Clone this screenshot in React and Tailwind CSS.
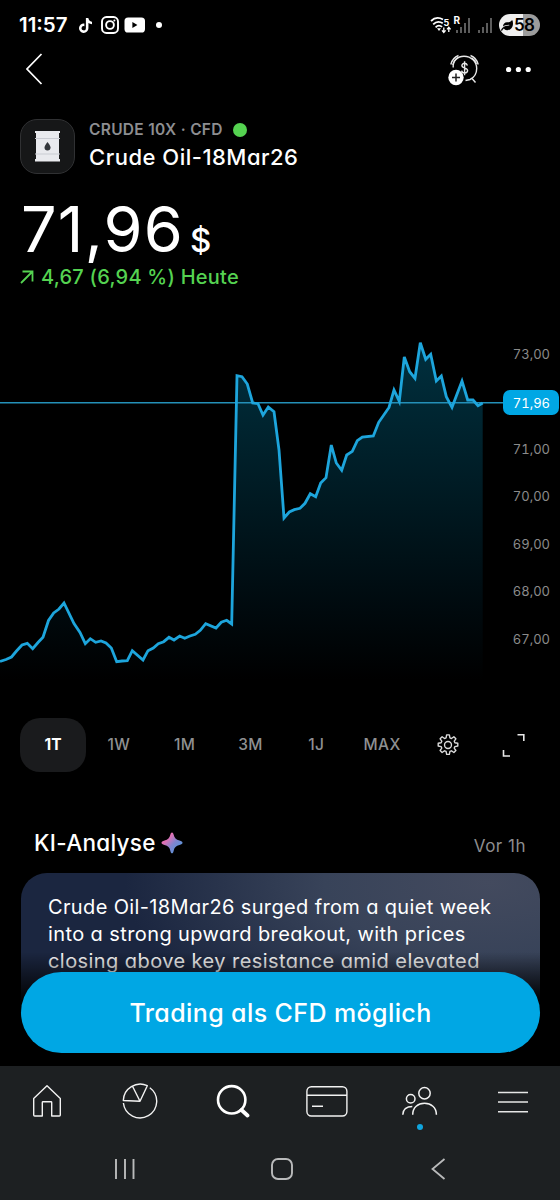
import { FaTiktok, FaInstagram, FaYoutube, FaLeaf } from "react-icons/fa";

const points = "0,661.5 6,659.5 11.5,657 16.5,651 22,645 27.3,643.3 32.7,648.7 38,642.5 43,637.3 48.5,620.5 53.7,613 59,609 64,603 74,623.5 80,632.5 85.3,643.7 90.3,638.7 95.7,642.3 101,641 106,643 111.3,648 116.7,661.7 122,661 127.3,660.7 132.3,650.7 143,660 148,650.7 153.3,648 158.3,643.7 163.7,641.7 169,637.3 174,640 179.7,636 184.7,638.3 190,636 195.3,634.3 200.3,630.3 205.7,623.7 216,628 221.3,622.3 226.7,620.3 231.7,624 237,375.7 242,376.7 247.3,384 252.7,403 258,403.7 263,415 268.3,407 274,411.7 279,450 284,518 289.3,512 294.3,509.7 300,508.3 305,503.3 310.3,493.7 315.7,496.7 320.7,483 326,477.7 331.3,445 336.3,463 341.7,470.3 346.7,455 352.3,451.3 357.3,440.7 362.3,437 373.3,436 378.7,422.3 389,407.5 394,390 399.3,401.3 404.3,357 409.7,371.7 415,378.3 420.3,342.7 425.7,359.3 430.7,354.3 436.3,381 441.3,376 446.3,396.7 452,407.3 462,381 467.7,400 473,400 478,405.7 482.7,403";

const axis = ["73,00", "71,96", "71,00", "70,00", "69,00", "68,00", "67,00"];
const ranges = ["1T", "1W", "1M", "3M", "1J", "MAX"];

function StatusBar() {
    return (
        <div className="flex h-[50px] items-center pl-[19px] pr-[20px]">
            <span className="w-[60px] text-[20.5px] font-semibold leading-none">11:57</span>
            <FaTiktok className="h-[15px] w-[13px]" />
            <svg className="ml-[9px]" width="18" height="18" viewBox="0 0 18 18" fill="none" stroke="white" strokeWidth="1.9">
                <rect x="1" y="1" width="16" height="16" rx="4.5" />
                <circle cx="9" cy="9" r="3.9" />
                <circle cx="13.4" cy="4.6" r="1" fill="white" stroke="none" />
            </svg>
            <svg className="ml-[5px]" width="22" height="16" viewBox="0 0 22 16">
                <rect x="0.5" y="0.5" width="20.5" height="15" rx="3.6" fill="white" />
                <path d="M8.4 4.9v6l5-3z" fill="black" />
            </svg>
            <span className="ml-[10px] h-[6px] w-[6px] rounded-full bg-white" />
            <svg className="ml-auto" width="66" height="20" viewBox="0 0 66 20" fill="none">
                <g stroke="white" strokeWidth="1.8">
                    <path d="M1 6C4.500 2.500 9 2.200 13 4.500" />
                    <path d="M3.2 9.300c3-3 6.500-3 9.600-1" />
                    <path d="M5.600 12.300c2-2 4.500-2 6.500-.4" />
                </g>
                <path d="M7 13.2h4L9 16z" fill="white" />
                <path d="M13.8 12.5v4.600M12 15.300l1.800 2.200 1.800-2.200M18.800 17v-4.600M17 14.400l1.800-2.200 1.800 2.200" stroke="white" strokeWidth="1.3" />
                <text x="13.400" y="10.500" fontSize="9" fontWeight="700" fill="white" fontFamily="Inter, sans-serif">5</text>
                <text x="23.500" y="8.800" fontSize="10" fontWeight="700" fill="white" fontFamily="Inter, sans-serif">R</text>
                <g fill="#5c5c5c">
                    <path d="M26 15h2v3h-2zM30 12h2v6h-2zM34 8h2v10h-2zM38 3h2v15h-2z" />
                    <path d="M48 15h2v3h-2zM52 12h2v6h-2zM56 8h2v10h-2zM60 3h2v15h-2z" />
                </g>
            </svg>
            <div className="ml-[3px] flex h-[22px] w-[41px] items-center rounded-full bg-[linear-gradient(90deg,#f0f0f0_58%,#9c9c9c_58%)] pl-[2px] text-black">
                <FaLeaf className="h-[11px] w-[12px] shrink-0" />
                <span className="ml-[1px] text-[17px] font-semibold leading-none tracking-[-0.8px]">58</span>
            </div>
        </div>
    );
}

function Header() {
    return (
        <div className="flex h-[69px] justify-between pl-[26px] pr-[28px]">
            <svg width="18" height="36" viewBox="0 0 18 36" fill="none" stroke="white" strokeWidth="1.7">
                <path d="M15.5 4L1 19l14.5 15" />
            </svg>
            <div className="flex">
                <svg width="32" height="36" viewBox="0 0 32 36" fill="none" stroke="#e8e8e8" strokeWidth="1.4">
                    <path d="M5.200 17.500C4.500 11 9.500 6.200 16 6.200c7.200 0 12.700 5.500 12.700 12.300 0 5-2.700 9-6.700 11l-4.500 1" />
                    <path d="M2.800 14.500C3.800 10.500 6.500 7 10.500 5.500M4.800 15C5.600 11.500 7.500 9 10 7.500M30.200 14.500C29.200 10.500 26.500 7 22.500 5.500M28.400 14C27.400 11 25.600 9 23.500 7.800M24 28.500l3.500 4" />
                    <path d="M19.400 15.500c-.4-1.500-1.400-2.200-2.800-2.200-1.600 0-2.700.9-2.700 2.300 0 3.400 5.700 1.600 5.700 5 0 1.500-1.200 2.400-2.900 2.400s-2.800-.8-3.100-2.400M16.600 11.300v14" />
                    <circle cx="8" cy="27.500" r="7.700" fill="white" stroke="none" />
                    <path d="M8 23.500v8M4 27.500h8" stroke="#222" strokeWidth="1.500" />
                </svg>
                <svg className="ml-[26px]" width="26" height="34" viewBox="0 0 26 34" fill="white">
                    <circle cx="2.6" cy="19.5" r="2.6" />
                    <circle cx="12.4" cy="19.5" r="2.6" />
                    <circle cx="22.2" cy="19.5" r="2.6" />
                </svg>
            </div>
        </div>
    );
}

function Asset() {
    return (
        <div className="flex h-[55px] pl-[20px]">
            <div className="flex h-[55px] w-[55px] items-center justify-center rounded-[17px] border border-[#303133] bg-[#161718]">
                <svg width="27" height="33" viewBox="0 0 27 33">
                    <path d="M1 1h25v2h-1v26h1v2.500H1V29h1V3H1z" fill="#e9eaee" />
                    <path d="M1 8.500h25M1 24h25" stroke="#c9cbd2" strokeWidth="1.200" />
                    <path d="M13.500 12c2 2.500 3 4 3 5.600a3 3 0 0 1-6 0c0-1.600 1-3.100 3-5.600z" fill="#33363b" />
                </svg>
            </div>
            <div className="pl-[14px]">
                <div className="flex h-[22px] items-center text-[15.5px] font-semibold text-[#8d8e91]">
                    <span className="w-[144px] whitespace-nowrap tracking-[0.3px]">CRUDE 10X · CFD</span>
                    <span className="h-[14px] w-[14px] rounded-full bg-[#55d351]" />
                </div>
                <div className="mt-[2px] whitespace-nowrap text-[22px] font-medium leading-[28px] tracking-[0.5px]">Crude Oil-18Mar26</div>
            </div>
        </div>
    );
}

function Price() {
    return (
        <div className="h-[126px] pl-[20px] pt-[24px]">
            <div className="flex h-[66px] items-baseline leading-[62px]">
                <span className="w-[170px] pl-px text-[63px] tracking-[1.200px]">71,96</span>
                <span className="text-[33px] font-medium">$</span>
            </div>
            <div className="flex items-center text-[20px] font-medium leading-[26px] tracking-[0.25px] text-[#55d351]">
                <svg className="mr-[7px]" width="14" height="14" viewBox="0 0 14 14" fill="none" stroke="currentColor" strokeWidth="1.800">
                    <path d="M1 13L12.500 1.500M2.500 1.500h10V11.500" />
                </svg>
                4,67 (6,94 %) Heute
            </div>
        </div>
    );
}

function Chart() {
    return (
        <div className="flex h-[418px]">
            <svg className="shrink-0" width="503" height="400" viewBox="0 300 503 400" fill="none">
                <defs>
                    <linearGradient id="area" x1="0" y1="342" x2="0" y2="680" gradientUnits="userSpaceOnUse">
                        <stop offset="0" stopColor="#00303f" />
                        <stop offset="0.250" stopColor="#00242f" />
                        <stop offset="0.800" stopColor="#00090d" />
                        <stop offset="1" stopColor="#000000" />
                    </linearGradient>
                </defs>
                <polygon points={`${points} 482.7,680 0,680`} fill="url(#area)" />
                <path d="M0 402.700h503" stroke="#2490b8" strokeWidth="1.500" />
                <polyline points={points} stroke="#1da5dc" strokeWidth="2.800" />
            </svg>
            <div className="flex w-[57px] flex-col pt-[42px] text-[13px] leading-[25px] text-[#8b8b8b] [font-feature-settings:'tnum']">
                {axis.map((label) => (
                    <div
                        key={label}
                        className={label === "71,96" ? "h-[46.500px]" : label === "73,00" ? "h-[48px] pr-[10px] text-right" : "h-[47.500px] pr-[10px] text-right"}
                    >
                        {label === "71,96" ? <div className="h-[25px] w-[56px] rounded-[7px] bg-[#00a7e4] pr-[9px] text-right leading-[26px] text-white">{label}</div> : label}
                    </div>
                ))}
            </div>
        </div>
    );
}

function Ranges() {
    return (
        <div className="ml-[20px] flex h-[54px] items-center text-[15.500px] font-medium text-[#8f9092]">
            {ranges.map((r) => (
                <div
                    key={r}
                    className={r === "1T" ? "flex h-[54px] w-[66px] items-center justify-center rounded-[20px] bg-[#1a1b1d] font-bold text-white" : "flex w-[65.800px] justify-center tracking-[0.4px]"}
                >
                    {r}
                </div>
            ))}
            <div className="flex w-[66px] justify-center">
                <svg width="22" height="22" viewBox="0 0 24 24" fill="none" stroke="#dcdcdc" strokeWidth="1.500" strokeLinejoin="round">
                    <path d="M10.500 1h3l.6 3.200 1.700.7 2.600-1.900 2.200 2.200-1.800 2.600.7 1.700 3.200.6v3l-3.200.6-.7 1.700 1.800 2.600-2.200 2.200-2.600-1.900-1.700.7-.6 3.200h-3l-.6-3.200-1.700-.7-2.600 1.900-2.200-2.200 1.800-2.600-.7-1.700-3.200-.6v-3l3.200-.6.7-1.700-1.800-2.600 2.200-2.200 2.600 1.900 1.700-.7z" />
                    <circle cx="12" cy="12" r="3.800" />
                </svg>
            </div>
            <div className="flex w-[66px] justify-center">
                <svg width="24" height="24" viewBox="0 0 24 24" fill="none" stroke="#e8e8e8" strokeWidth="1.600">
                    <path d="M15.500 1.800h6.300V8M1.500 17v6h6.500" />
                </svg>
            </div>
        </div>
    );
}

function Analysis() {
    return (
        <div className="pl-[21px] pr-[20px] pt-[56px]">
            <div className="flex h-[45px] items-start justify-between pl-[13px] pr-[14px]">
                <div className="flex items-center text-[22.500px] font-medium leading-[30px]">
                    <span className="w-[127px] whitespace-nowrap tracking-[0.300px]">KI-Analyse</span>
                    <svg width="22" height="22" viewBox="0 0 22 22">
                        <defs>
                            <linearGradient id="spark" x1="0.150" y1="0.200" x2="0.800" y2="0.800">
                                <stop offset="0.200" stopColor="#e271b5" />
                                <stop offset="0.600" stopColor="#8185cf" />
                                <stop offset="1" stopColor="#5b93d9" />
                            </linearGradient>
                        </defs>
                        <path d="M11 .5c.8 0 1.300.7 1.600 2 .8 3.500 2.400 5.100 5.900 5.900 2 .5 3 1.300 3 2.300s-1 1.800-3 2.300c-3.500.8-5.100 2.400-5.900 5.900-.3 1.600-.8 2.400-1.600 2.400s-1.300-.8-1.600-2.400c-.8-3.500-2.400-5.100-5.900-5.900-2-.5-3-1.300-3-2.300s1-1.800 3-2.300c3.500-.8 5.100-2.400 5.900-5.900.3-1.300.8-2 1.600-2z" fill="url(#spark)" />
                    </svg>
                </div>
                <span className="pt-[5px] text-[17px] leading-[26px] tracking-[0.5px] text-[#8d8d8f]">Vor 1h</span>
            </div>
            <div className="h-[190px] rounded-[26px] bg-[radial-gradient(ellipse_70%_90%_at_90%_5%,#434a5e_0%,#384359_45%,#1b2640_100%)] pl-[27px] pt-[21px] text-[20px] leading-[27px] tracking-[0.47px]">
                <div className="whitespace-nowrap tracking-[0.360px]">Crude Oil-18Mar26 surged from a quiet week</div>
                <div className="whitespace-nowrap tracking-[0.400px]">into a strong upward breakout, with prices</div>
                <div className="whitespace-nowrap tracking-[0.430px]">closing above key resistance amid elevated</div>
            </div>
        </div>
    );
}

function BottomNav() {
    return (
        <div className="h-[134px] bg-[#1d2022]">
            <div className="grid h-[70px] grid-cols-6 items-center justify-items-center">
                <svg width="34" height="40" viewBox="0 0 34 40" fill="none" stroke="#f2f2f2" strokeWidth="1.400" strokeLinejoin="round">
                    <path d="M17 4.700L3.700 17.500V34q0 1 1 1h7.600V21.500q0-.7.700-.7h8q.7 0 .7.700V35h7.600q1 0 1-1V17.500z" />
                </svg>
                <svg width="36" height="40" viewBox="0 0 36 40" fill="none" stroke="#f2f2f2" strokeWidth="1.400" strokeLinejoin="round">
                    <path d="M1.300 19.500A17 17 0 0 1 25.300 4.700L18 20.300zM10.500 5.200L18 20.300" />
                    <path d="M27.800 6.700A16.700 16.700 0 1 1 1.400 22" />
                </svg>
                <svg width="34" height="40" viewBox="0 0 34 40" fill="none" stroke="white" strokeWidth="2.600" strokeLinecap="round">
                    <circle cx="15.700" cy="18.800" r="13.700" />
                    <path d="M25.500 29l6 5.500" strokeWidth="3.800" />
                </svg>
                <svg width="42" height="40" viewBox="0 0 42 40" fill="none" stroke="#f2f2f2" strokeWidth="1.400">
                    <rect x="0.900" y="5.700" width="40" height="29.300" rx="4.500" />
                    <path d="M1 14.200h40M6 25.200h11" />
                </svg>
                <div className="flex w-[36px] flex-col items-center pt-[9px]">
                    <svg width="36" height="40" viewBox="0 0 36 40" fill="none" stroke="#f2f2f2" strokeWidth="1.500">
                        <circle cx="22.500" cy="12.300" r="5.700" />
                        <circle cx="8.700" cy="17.700" r="4.300" />
                        <path d="M10.700 33.700C10.700 26.500 16 22.300 22.500 22.300s11.900 4.200 11.900 11.400M.8 33.700c0-5 3.700-8.300 9.500-8.300" />
                    </svg>
                    <span className="mt-[3px] h-[6px] w-[6px] rounded-full bg-[#10a5de]" />
                </div>
                <svg width="30" height="40" viewBox="0 0 30 40" fill="none" stroke="#e6e6e6" strokeWidth="1.500">
                    <path d="M0 11.500h30M0 21h30M0 30.700h30" />
                </svg>
            </div>
            <div className="ml-[114px] mt-[21px] flex w-[332px] items-center justify-between">
                <svg width="22" height="24" viewBox="0 0 22 24" stroke="#b9babb" strokeWidth="1.900">
                    <path d="M2 2v20M11 2v20M19.500 2v20" />
                </svg>
                <svg className="mr-[2px]" width="24" height="24" viewBox="0 0 24 24" fill="none" stroke="#b9babb" strokeWidth="1.900">
                    <rect x="2" y="2" width="20" height="20" rx="6" />
                </svg>
                <svg width="16" height="24" viewBox="0 0 16 24" fill="none" stroke="#b9babb" strokeWidth="1.800">
                    <path d="M14.500 2L2.500 12l12 10" />
                </svg>
            </div>
        </div>
    );
}

function App() {
    return (
        <div className="flex h-[1200px] w-[560px] flex-col overflow-hidden bg-black font-['Inter',sans-serif] text-white [font-feature-settings:'cv11']">
            <div className="relative h-[1066px] shrink-0 overflow-hidden">
                <StatusBar />
                <Header />
                <Asset />
                <Price />
                <Chart />
                <Ranges />
                <Analysis />
                <div className="absolute inset-x-0 bottom-0 h-[114px] bg-[linear-gradient(180deg,transparent_0%,black_45%)]" />
                <button className="absolute bottom-[13px] left-[21px] h-[81px] w-[519px] rounded-full bg-[#00a7e4] pt-[2px] text-[25px] font-medium tracking-[0.4px]">
                    Trading als CFD möglich
                </button>
            </div>
            <BottomNav />
        </div>
    );
}

export default App;
